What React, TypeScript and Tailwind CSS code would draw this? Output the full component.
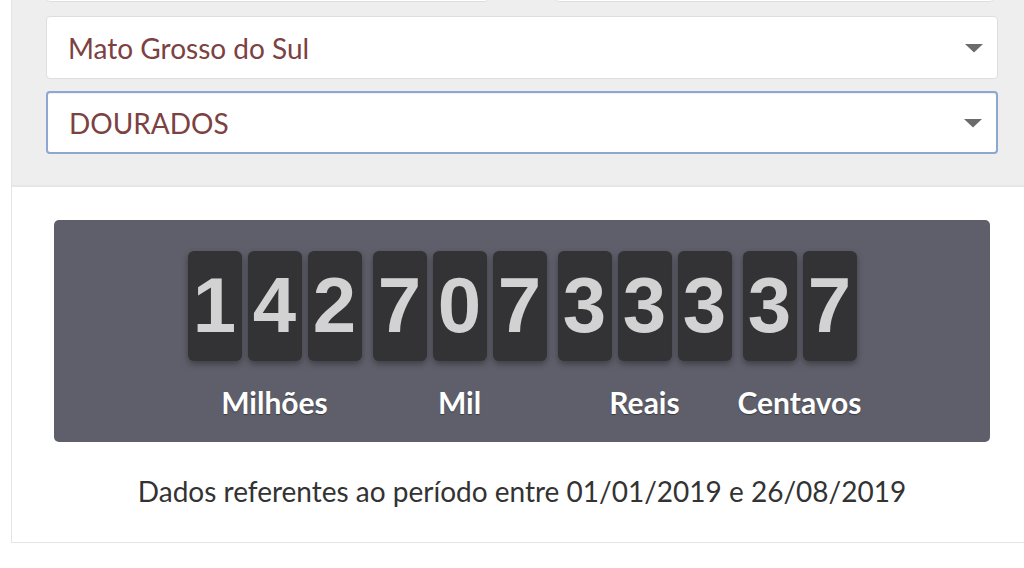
import React from "react";

const GROUPS: { digits: string; label: string }[] = [
  { digits: "142", label: "Milhões" },
  { digits: "707", label: "Mil" },
  { digits: "333", label: "Reais" },
  { digits: "37", label: "Centavos" },
];

function Caret() {
  return (
    <svg width="18" height="10" viewBox="0 0 18 10" className="shrink-0">
      <path d="M0 1 L18 1 L9 9.5 Z" fill="#6b6b6b" />
    </svg>
  );
}

function SelectBox({ value, focused }: { value: string; focused?: boolean }) {
  return (
    <div
      className={
        "h-[63px] rounded-[4px] bg-white flex items-center justify-between pl-[21px] pr-[14px] " +
        (focused
          ? "border-2 border-[#8ea7d2] shadow-[inset_0_1px_1px_rgba(0,0,0,0.06)]"
          : "border border-[#dedede]")
      }
    >
      <span className="text-[28px] text-[#7c4141] leading-none">{value}</span>
      <Caret />
    </div>
  );
}

function Tile({ d }: { d: string }) {
  return (
    <div className="w-[54px] h-[110px] rounded-[6px] bg-[#333335] shadow-[0_3px_6px_rgba(0,0,0,0.35)] flex items-center justify-center">
      <span
        className="text-[78px] font-bold leading-none text-[#d2d2d2] -mt-[3px]"
        style={{ fontFamily: "'Liberation Sans', Arial, sans-serif" }}
      >
        {d}
      </span>
    </div>
  );
}

export default function App() {
  return (
    <div
      className="w-[1024px] h-[568px] overflow-hidden bg-white pl-[11px]"
      style={{ fontFamily: "Lato, 'Noto Sans', sans-serif" }}
    >
      <div className="w-[1021px] border-l border-b border-[#e4e4e4]">
        {/* filters */}
        <div className="bg-[#eeeeee] border-b-2 border-[#e6e6e6] px-[34px] pb-[31px]">
          <div className="grid grid-cols-2 gap-[66px] -mt-[60px]">
            <div className="h-[62px] rounded-[4px] bg-white border border-[#dedede]" />
            <div className="h-[62px] rounded-[4px] bg-white border border-[#dedede] mr-[4px]" />
          </div>
          <div className="flex flex-col gap-[12px] mt-[14px]">
            <SelectBox value="Mato Grosso do Sul" />
            <SelectBox value="DOURADOS" focused />
          </div>
        </div>

        {/* counter */}
        <div className="px-[42px] pt-[33px] pb-[36px] flex flex-col items-center">
          <div className="w-full rounded-[5px] bg-[#5e5f6a] pt-[31px] pb-[24px] flex justify-center gap-[11px]">
            {GROUPS.map((g) => (
              <div
                key={g.label}
                className={"flex flex-col " + (g.digits.length === 3 ? "w-[174px]" : "w-[114px]")}
              >
                <div className="flex gap-[6px]">
                  {g.digits.split("").map((d, i) => (
                    <Tile key={i} d={d} />
                  ))}
                </div>
                <div className="mt-[26px] flex justify-center">
                  <span className="whitespace-nowrap text-[30px] font-bold leading-[31px] text-white [text-shadow:0_1px_1px_rgba(0,0,0,0.4)]">
                    {g.label}
                  </span>
                </div>
              </div>
            ))}
          </div>
          <p className="mt-[34px] text-[28px] leading-[30px] text-[#333333]">
            Dados referentes ao período entre 01/01/2019 e 26/08/2019
          </p>
        </div>
      </div>
    </div>
  );
}
